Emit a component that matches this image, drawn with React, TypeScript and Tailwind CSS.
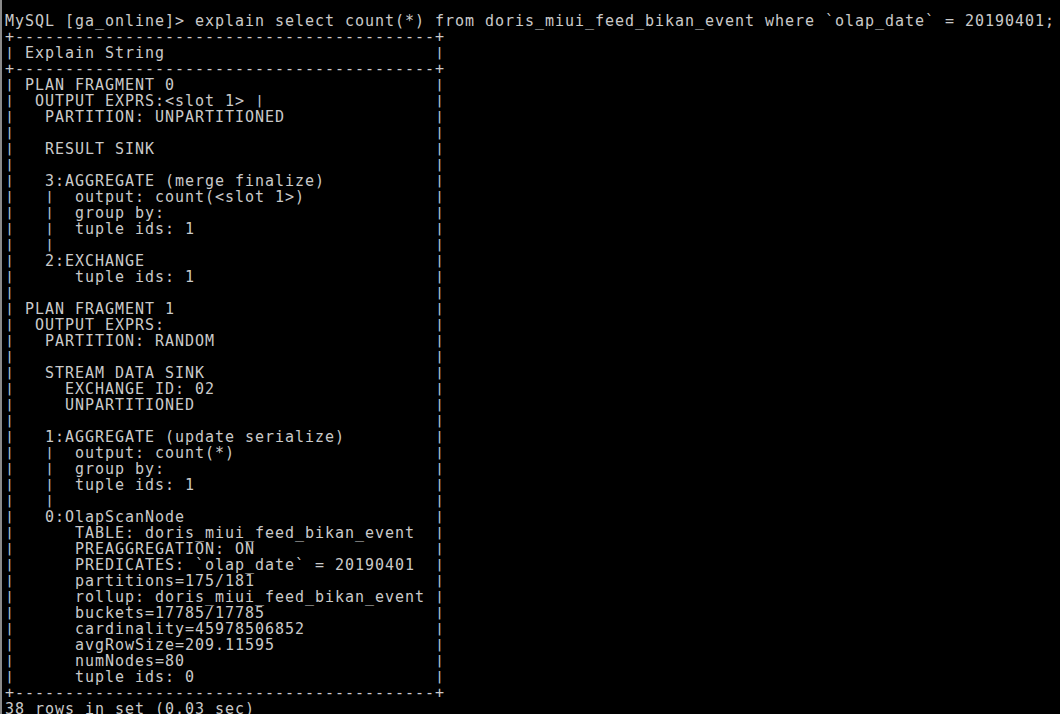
import React from "react";

const W = 40;
const row = (s: string) => "| " + s.padEnd(W, " ") + " |";
const sep = "+" + "-".repeat(W + 2) + "+";

const content = [
  "PLAN FRAGMENT 0",
  " OUTPUT EXPRS:<slot 1> |",
  "  PARTITION: UNPARTITIONED",
  "",
  "  RESULT SINK",
  "",
  "  3:AGGREGATE (merge finalize)",
  "  |  output: count(<slot 1>)",
  "  |  group by:",
  "  |  tuple ids: 1",
  "  |",
  "  2:EXCHANGE",
  "     tuple ids: 1",
  "",
  "PLAN FRAGMENT 1",
  " OUTPUT EXPRS:",
  "  PARTITION: RANDOM",
  "",
  "  STREAM DATA SINK",
  "    EXCHANGE ID: 02",
  "    UNPARTITIONED",
  "",
  "  1:AGGREGATE (update serialize)",
  "  |  output: count(*)",
  "  |  group by:",
  "  |  tuple ids: 1",
  "  |",
  "  0:OlapScanNode",
  "     TABLE: doris_miui_feed_bikan_event",
  "     PREAGGREGATION: ON",
  "     PREDICATES: `olap_date` = 20190401",
  "     partitions=175/181",
  "     rollup: doris_miui_feed_bikan_event",
  "     buckets=17785/17785",
  "     cardinality=45978506852",
  "     avgRowSize=209.11595",
  "     numNodes=80",
  "     tuple ids: 0",
];

const lines = [
  "MySQL [ga_online]> explain select count(*) from doris_miui_feed_bikan_event where `olap_date` = 20190401;",
  sep,
  row("Explain String"),
  sep,
  ...content.map(row),
  sep,
  "38 rows in set (0.03 sec)",
];

function Line({ text }: { text: string }) {
  const parts = text.split("|");
  const out: React.ReactNode[] = [];
  parts.forEach((p, i) => {
    if (i > 0)
      out.push(
        <span key={"p" + i} className="inline-block scale-y-[0.78] text-[#b4c2d0]">
          |
        </span>
      );
    if (p) out.push(<React.Fragment key={"t" + i}>{p}</React.Fragment>);
  });
  return <div className="h-[16px]">{out}</div>;
}

export default function App() {
  return (
    <div className="w-[1060px] h-[714px] overflow-hidden bg-black border-l-2 border-[#8a8a8a]">
      <div
        className="pt-[13px] pl-[3px] text-[15px] leading-[16px] tracking-[0.97px] text-[#cacaca] whitespace-pre"
        style={{ fontFamily: '"DejaVu Sans Mono", monospace' }}
      >
        {lines.map((l, i) => (
          <Line key={i} text={l} />
        ))}
      </div>
    </div>
  );
}
